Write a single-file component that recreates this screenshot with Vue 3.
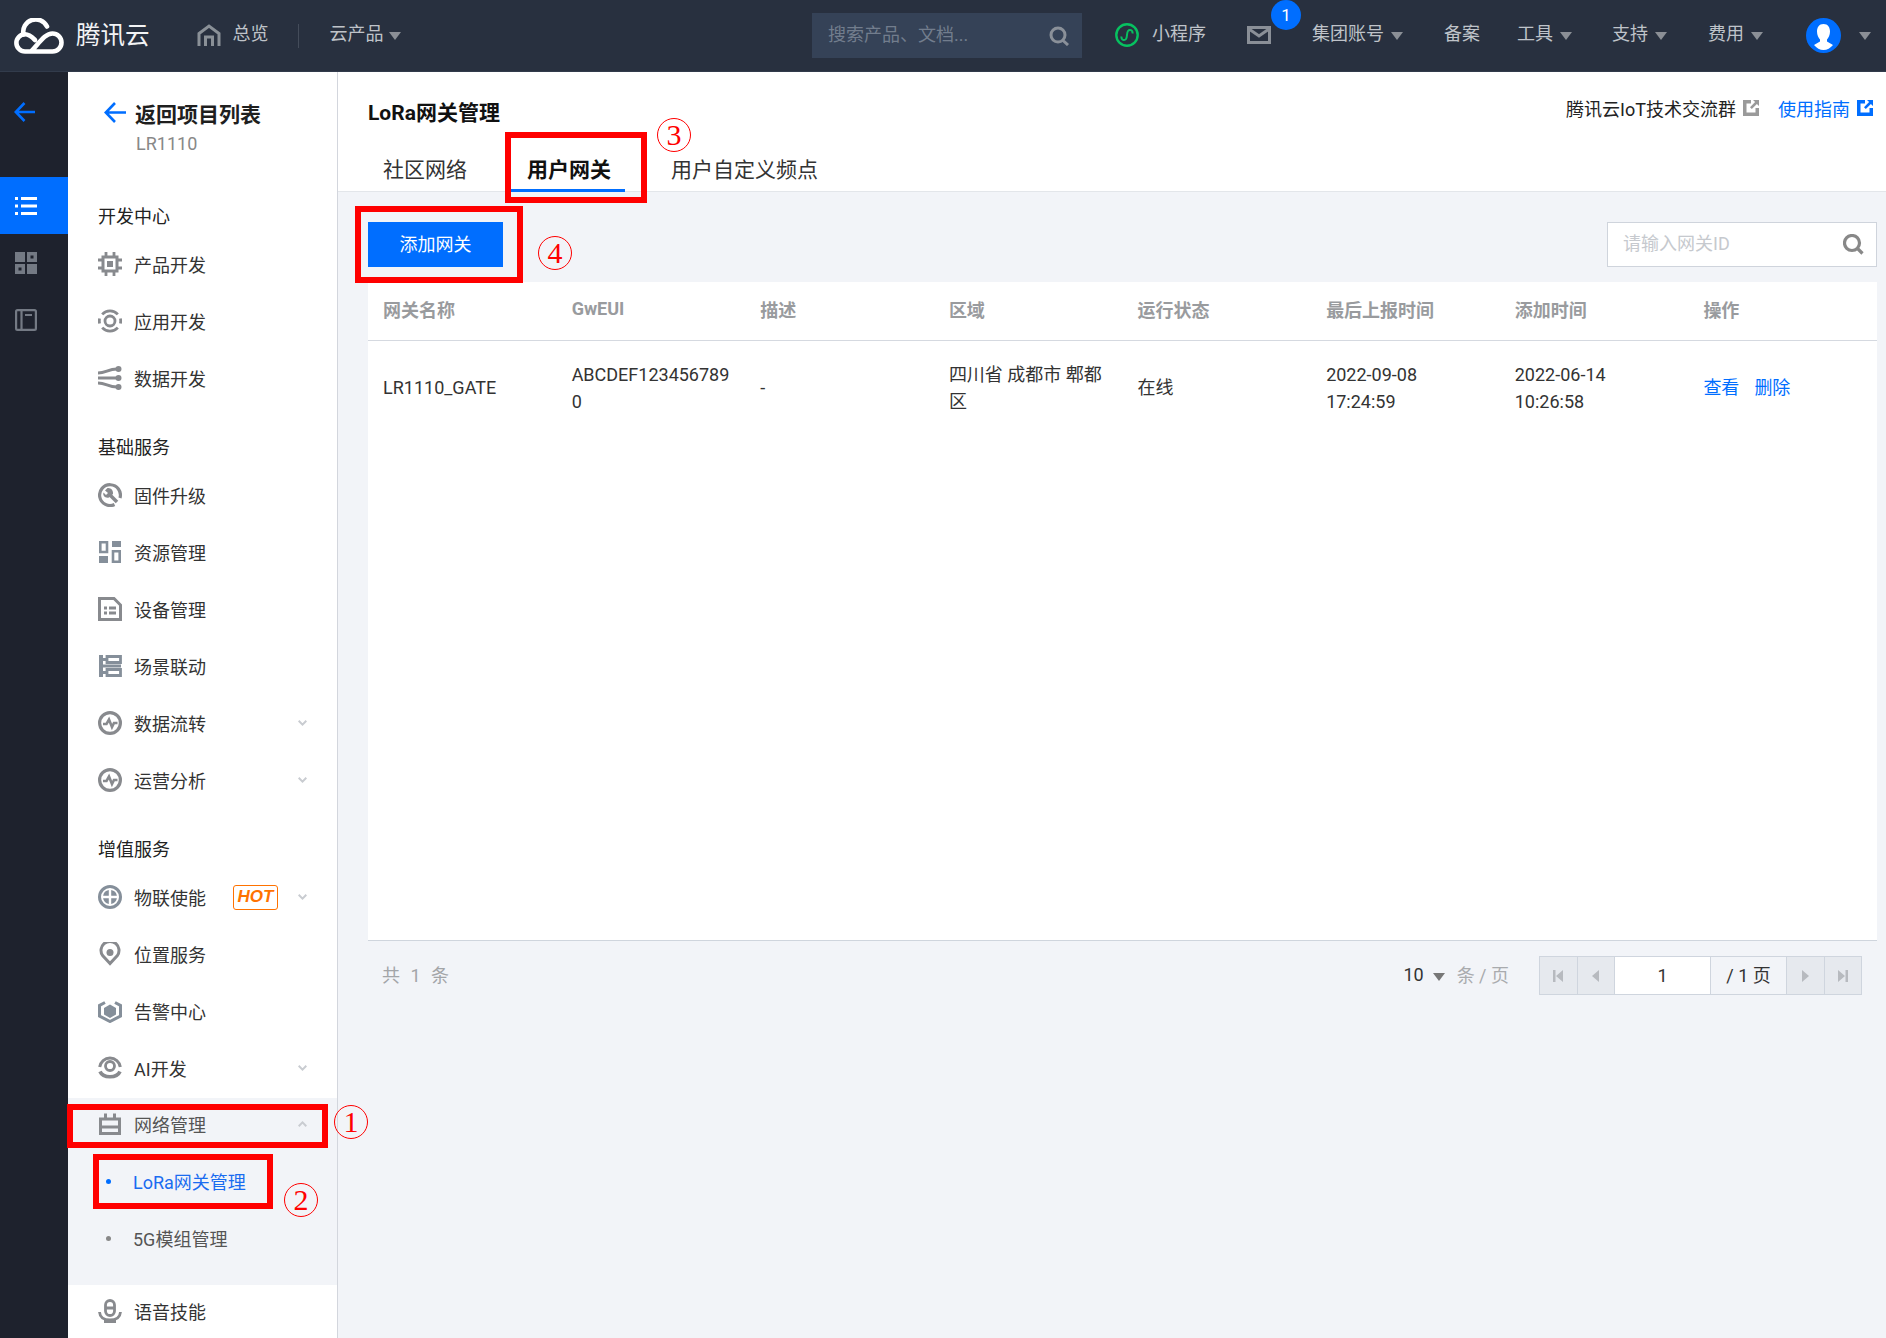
<script setup>
const icons = {
  chip: [
    { s: 3, d: 'M5 5H19V19H5Z' },
    { f: 1, d: 'M9 9H15V15H9Z' },
    { s: 2.8, d: 'M8 0V5M16 0V5M8 19V24M16 19V24M0 8H5M0 16H5M19 8H24M19 16H24' }
  ],
  ring: [
    { s: 2.8, d: 'M4.2 5.4A10.5 10.5 0 0 1 19.8 5.4M22.4 9.5A10.5 10.5 0 0 1 22.4 14.5M19.8 18.6A10.5 10.5 0 0 1 4.2 18.6M1.6 14.5A10.5 10.5 0 0 1 1.6 9.5' },
    { s: 2.8, d: 'M12 7A5 5 0 1 1 12 17A5 5 0 1 1 12 7Z' }
  ],
  flow: [
    { s: 2.8, d: 'M0 7C8 7 10 3 19 3M0 12H19M0 17C8 17 10 21 19 21' },
    { f: 1, d: 'M20.5 0a3 3 0 1 1 0 6a3 3 0 1 1 0-6ZM20.5 9a3 3 0 1 1 0 6a3 3 0 1 1 0-6ZM20.5 18a3 3 0 1 1 0 6a3 3 0 1 1 0-6Z' }
  ],
  firmware: [
    { s: 3.2, d: 'M16.500 21.500A10.400 10.400 0 1 1 22 15' },
    { s: 3.6, d: 'M10.500 10.500L19 19' },
    { f: 1, d: 'M9.500 5L7 7.500L10 10L8 12L5.500 9.500C4.500 12.500 7 15.500 11 14.500L15 11C15.500 7.500 13 4.500 9.500 5Z' }
  ],
  res: [
    { s: 2.6, d: 'M2.300 2.300H9V12H2.300ZM15 11.300H21.700V21.700H15Z' },
    { f: 1, d: 'M14 1H23V7H14ZM1 16H10V23H1Z' }
  ],
  device: [
    { s: 3, d: 'M1.5 1.5H16L22.5 8V22.5H1.5Z' },
    { f: 1, d: 'M6 9.5H9V12.5H6ZM11 9.5H18V12.5H11ZM6 14.5H9V17.5H6ZM11 14.5H18V17.5H11Z' }
  ],
  scene: [
    { s: 2.8, d: 'M9 2.5H22.5V8.5H9ZM9 15.5H22.5V21.5H9Z' },
    { f: 1, d: 'M1 1H5V23H1ZM5 4H9V7H5ZM5 10.5H23V13.5H5ZM5 17H9V20H5Z' }
  ],
  pulse: [
    { s: 3.200, d: 'M12 1.600A10.400 10.400 0 1 1 12 22.400A10.400 10.400 0 1 1 12 1.600Z' },
    { s: 2.6, d: 'M5 13H8.5L11 8.5L14 16L16 12H19.5' }
  ],
  hub: [
    { s: 3, d: 'M12 1.500A10.500 10.500 0 1 1 12 22.500A10.500 10.500 0 1 1 12 1.500Z' },
    { f: 1, d: 'M10.800 5.100V10.800H5.100A7 7 0 0 1 10.800 5.100ZM13.200 5.100A7 7 0 0 1 18.900 10.800H13.200ZM5.100 13.200H10.800V18.900A7 7 0 0 1 5.100 13.200ZM13.200 13.200H18.900A7 7 0 0 1 13.200 18.900Z' }
  ],
  pin: [
    { s: 3, d: 'M12 21.5L4.6 13.5A9 9 0 1 1 19.4 13.5Z' },
    { f: 1, d: 'M12 7a3.500 3.500 0 1 1 0 7a3.500 3.500 0 1 1 0-7Z' }
  ],
  alert: [
    { s: 3, d: 'M7 3.5L1.5 6.5V17L12 22.5L22.5 17V6.5L17 3.5' },
    { f: 1, d: 'M12 5.5L18 9V15.5L12 19L6 15.5V9Z' }
  ],
  ai: [
    { s: 3, d: 'M1.700 11A10.400 10.400 0 0 1 22.300 11' },
    { s: 3.600, d: 'M2 15.500C5 22.500 19 22.500 22 15.500' },
    { s: 2.800, d: 'M12 5.500A4.500 4.500 0 1 1 12 14.500A4.500 4.500 0 1 1 12 5.500Z' }
  ],
  network: [
    { s: 3, d: 'M2.500 7H21.500V21.500H2.500ZM7.500 1.500V7M16.500 1.500V7M2.500 15H21.500' }
  ],
  voice: [
    { s: 2.8, d: 'M12 1.5A4.5 4.5 0 0 1 16.5 6V12A4.5 4.5 0 0 1 7.5 12V6A4.5 4.5 0 0 1 12 1.5ZM7.5 9H16.5' },
    { s: 2.8, d: 'M1.5 13C2 19 6 21 12 21C18 21 22 19 22.5 13M12 21V24M6 22.5H18' }
  ]
}

const groups = [
  {
    title: '开发中心',
    items: [
      { icon: 'chip', label: '产品开发' },
      { icon: 'ring', label: '应用开发' },
      { icon: 'flow', label: '数据开发' }
    ]
  },
  {
    title: '基础服务',
    items: [
      { icon: 'firmware', label: '固件升级' },
      { icon: 'res', label: '资源管理', blue: true },
      { icon: 'device', label: '设备管理' },
      { icon: 'scene', label: '场景联动', blue: true },
      { icon: 'pulse', label: '数据流转', arrow: 'down' },
      { icon: 'pulse', label: '运营分析', arrow: 'down' }
    ]
  },
  {
    title: '增值服务',
    items: [
      { icon: 'hub', label: '物联使能', hot: true, arrow: 'down', blue: true },
      { icon: 'pin', label: '位置服务' },
      { icon: 'alert', label: '告警中心', blue: true },
      { icon: 'ai', label: 'AI开发', arrow: 'down' }
    ]
  }
]

const columns = ['网关名称', 'GwEUI', '描述', '区域', '运行状态', '最后上报时间', '添加时间', '操作']
const row = ['LR1110_GATE', 'ABCDEF1234567890', '-', '四川省 成都市 郫都区', '在线', '2022-09-08 17:24:59', '2022-06-14 10:26:58']
</script>

<template>
  <div class="page">
    <header class="topbar">
      <svg class="logo" viewBox="0 0 50 36" fill="none" stroke="#fff" stroke-width="4.6" stroke-linecap="round">
        <path d="M9.5 16.5A12.5 12.5 0 0 1 33 8.5" />
        <path d="M17 33.5H38.5A9 9 0 0 0 38.5 15.5C31 15.5 26 24 17 33.5H11A8.6 8.6 0 0 1 11 16.3C15 16.3 18 19 21 22" />
      </svg>
      <span class="brand">腾讯云</span>
      <svg class="home" viewBox="0 0 24 22" fill="none" stroke="#8a9097" stroke-width="3">
        <path d="M2 22V9.500L12 2L22 9.500V22M8.500 22V13H15.500V22" />
      </svg>
      <span class="t-link overview">总览</span>
      <i class="divider"></i>
      <span class="t-link">云产品</span>
      <i class="caret products"></i>

      <div class="search">
        <span>搜索产品、文档...</span>
        <svg viewBox="0 0 22 20" fill="none" stroke="#8a9099" stroke-width="3">
          <path d="M10 2A7 7 0 1 1 10 16A7 7 0 1 1 10 2ZM14.5 14L20 19" />
        </svg>
      </div>

      <div class="t-right">
        <div class="mini">
          <svg viewBox="0 0 24 24" fill="none" stroke="#07c160" stroke-width="2.4">
            <path d="M12 1.3A10.7 10.7 0 1 1 12 22.7A10.7 10.7 0 1 1 12 1.3Z" />
            <path stroke-width="2" d="M6.5 13.5C6 17 9.5 18 11 16C12.5 14 11.5 10 13 8C14.5 6 18 7 17.5 10.5" />
          </svg>
          <span class="t-link">小程序</span>
        </div>
        <div class="mail">
          <svg viewBox="0 0 24 18" fill="none" stroke="#8a8f97" stroke-width="3">
            <path d="M1.5 1.5H22.5V16.5H1.5ZM2 3L12 10L22 3" />
          </svg>
          <b class="badge">1</b>
        </div>
        <div class="t-menu"><span class="t-link">集团账号</span><i class="caret"></i></div>
        <span class="t-link">备案</span>
        <div class="t-menu tools"><span class="t-link">工具</span><i class="caret"></i></div>
        <div class="t-menu support"><span class="t-link">支持</span><i class="caret"></i></div>
        <div class="t-menu"><span class="t-link">费用</span><i class="caret"></i></div>
        <div class="t-menu account">
          <svg class="avatar" viewBox="0 0 35 35">
            <circle cx="17.5" cy="17.5" r="17.5" fill="#006eff" />
            <path fill="#fff" d="M17.5 6C22 6 24 9.500 24 13.500C24 17 22.500 20 21 21.500V23.500L27 27C24.500 30 21 32 17.500 32C14 32 10.500 30 8 27L14 23.500V21.500C12.500 20 11 17 11 13.500C11 9.500 13 6 17.500 6Z" />
          </svg>
          <i class="caret"></i>
        </div>
      </div>
    </header>

    <div class="body">
      <nav class="rail">
        <div class="rail-back">
          <svg viewBox="0 0 22 20" fill="none" stroke="#006eff" stroke-width="2.6">
            <path d="M21 10H2M10.500 1L1.800 10L10.500 19" />
          </svg>
        </div>
        <div class="rail-item active">
          <svg viewBox="0 0 22 18" fill="#fff">
            <path d="M0 0H3V3H0ZM6 0H22V3H6ZM0 7.500H3V10.500H0ZM6 7.500H22V10.500H6ZM0 15H3V18H0ZM6 15H22V18H6Z" />
          </svg>
        </div>
        <div class="rail-item">
          <svg viewBox="0 0 22 22" fill="#747a84">
            <path d="M0 0H10V10H0ZM12 12H22V22H12Z" />
            <path fill-rule="evenodd" d="M12 0H22V10H12ZM15.500 3.500V6.500H18.500V3.500ZM0 12H10V22H0ZM3.500 15.500V18.500H6.500V15.500Z" />
          </svg>
        </div>
        <div class="rail-item">
          <svg viewBox="0 0 22 22" fill="none" stroke="#747a84" stroke-width="2.2">
            <path d="M2.500 1.100H19.500Q20.900 1.100 20.900 2.500V19.500Q20.900 20.900 19.500 20.900H2.500Q1.100 20.900 1.100 19.500V2.500Q1.100 1.100 2.500 1.100ZM6.500 1V21M10 6H17" />
          </svg>
        </div>
      </nav>

      <aside class="side">
        <div class="side-head">
          <div class="back">
            <svg viewBox="0 0 22 21" fill="none" stroke="#006eff" stroke-width="2.6">
              <path d="M22 10.500H2M11 1L1.800 10.500L11 20" />
            </svg>
            <span>返回项目列表</span>
          </div>
          <div class="project">LR1110</div>
        </div>

        <section v-for="g in groups" :key="g.title" class="group">
          <h4>{{ g.title }}</h4>
          <div v-for="it in g.items" :key="it.label" class="item">
            <svg class="ico" :class="{ blue: it.blue }" viewBox="0 0 24 24">
              <path
                v-for="(p, i) in icons[it.icon]"
                :key="i"
                :d="p.d"
                :fill="p.f ? 'currentColor' : 'none'"
                :fill-rule="p.f ? 'evenodd' : null"
                :stroke="p.s ? 'currentColor' : 'none'"
                :stroke-width="p.s || 0"
              />
            </svg>
            <span>{{ it.label }}</span>
            <em v-if="it.hot" class="hot">HOT</em>
            <svg v-if="it.arrow" class="chev" viewBox="0 0 9 6" fill="none" stroke="#c9ccd1" stroke-width="2">
              <path d="M.7 .8L4.500 4.600L8.300 .8" />
            </svg>
          </div>
        </section>

        <div class="open-block">
          <div class="item muted">
            <svg class="ico" viewBox="0 0 24 24" fill="none" stroke="currentColor">
              <path :d="icons.network[0].d" stroke-width="3" />
            </svg>
            <span>网络管理</span>
            <svg class="chev" viewBox="0 0 9 6" fill="none" stroke="#c9ccd1" stroke-width="2">
              <path d="M.7 5.200L4.500 1.400L8.300 5.200" />
            </svg>
          </div>
          <div class="sub on"><i></i>LoRa网关管理</div>
          <div class="sub"><i></i>5G模组管理</div>
        </div>

        <div class="item">
          <svg class="ico" viewBox="0 0 24 24" fill="none" stroke="currentColor" stroke-width="2.8">
            <path :d="icons.voice[0].d" />
            <path :d="icons.voice[1].d" />
          </svg>
          <span>语音技能</span>
        </div>
      </aside>

      <main class="main">
        <div class="head">
          <div class="head-top">
            <h1>LoRa网关管理</h1>
            <div class="links">
              <a>腾讯云IoT技术交流群</a>
              <svg class="ext" viewBox="0 0 16 16" fill="#9a9a9a">
                <path d="M0 0H8V3.500H3.500V12.500H12.500V8H16V16H0ZM10 0H16V6L13.900 3.900L8.800 9L7 7.200L12.100 2.100Z" />
              </svg>
              <a class="blue-link">使用指南</a>
              <svg class="ext" viewBox="0 0 16 16" fill="#006eff">
                <path d="M0 0H8V3.500H3.500V12.500H12.500V8H16V16H0ZM10 0H16V6L13.900 3.900L8.800 9L7 7.200L12.100 2.100Z" />
              </svg>
            </div>
          </div>
          <div class="tabs">
            <span class="tab">社区网络</span>
            <span class="tab current">用户网关</span>
            <span class="tab">用户自定义频点</span>
          </div>
        </div>

        <div class="content">
          <div class="toolbar">
            <button class="add">添加网关</button>
            <div class="filter">
              <span>请输入网关ID</span>
              <svg viewBox="0 0 21 21" fill="none" stroke="#888" stroke-width="3.200">
                <path d="M9 1.500A7.500 7.500 0 1 1 9 16.500A7.500 7.500 0 1 1 9 1.500ZM14 14L19.500 19.500" />
              </svg>
            </div>
          </div>

          <div class="table">
            <div class="thead">
              <div v-for="c in columns" :key="c" class="cell">{{ c }}</div>
            </div>
            <div class="trow">
              <div v-for="(v, i) in row" :key="i" class="cell">{{ v }}</div>
              <div class="cell ops"><a>查看</a><a>删除</a></div>
            </div>
          </div>

          <div class="foot">
            <span class="total">共 1 条</span>
            <div class="size">
              <span class="num">10</span>
              <i class="caret"></i>
              <span class="unit">条 / 页</span>
            </div>
            <div class="pager">
              <span class="pg"><svg viewBox="0 0 10 12"><path d="M0 0H2.500V12H0ZM10 0V12L3 6Z" /></svg></span>
              <span class="pg"><svg viewBox="0 0 10 12"><path d="M8 0V12L1 6Z" /></svg></span>
              <span class="pg-input">1</span>
              <span class="pg-total">/ 1 页</span>
              <span class="pg"><svg viewBox="0 0 10 12"><path d="M2 0V12L9 6Z" /></svg></span>
              <span class="pg"><svg viewBox="0 0 10 12"><path d="M0 0L7 6L0 12ZM7.500 0H10V12H7.500Z" /></svg></span>
            </div>
          </div>
        </div>
      </main>
    </div>

    <i class="mark m1"></i>
    <i class="mark m2"></i>
    <i class="mark m3"></i>
    <i class="mark m4"></i>
    <span class="num-mark n1">1</span>
    <span class="num-mark n2">2</span>
    <span class="num-mark n3">3</span>
    <span class="num-mark n4">4</span>
  </div>
</template>

<style>
html, body { margin: 0; background: #f2f4f8; }
</style>

<style scoped>
* { box-sizing: border-box; }
.page {
  position: relative;
  width: 1886px;
  height: 1338px;
  overflow: hidden;
  font-family: Roboto, "Noto Sans CJK SC", sans-serif;
  font-size: 18px;
  color: #222;
  background: #f2f4f8;
}
h1, h4 { margin: 0; }
i, em { font-style: normal; display: block; }

/* top bar */
.topbar {
  height: 72px;
  display: flex;
  align-items: center;
  padding: 0 15px 0 14px;
  background: #28303f;
  border-bottom: 1px solid #323b4b;
}
.logo { width: 50px; height: 36px; flex: none; }
.brand { margin: 2px 0 0 12px; font-size: 24.500px; color: #f2f3f5; line-height: 1; }
.home { width: 24px; height: 22px; margin: -2px 0 0 47px; flex: none; }
.overview { margin-left: 12px; }
.t-link { display: block; padding-bottom: 3px; color: #bfc3c9; white-space: nowrap; line-height: 24px; }
.divider { width: 1px; height: 24px; margin: 0 31px 0 29px; background: #444c5a; }
.caret {
  width: 0;
  height: 0;
  border-left: 6px solid transparent;
  border-right: 6px solid transparent;
  border-top: 8px solid #8b8f96;
  flex: none;
}
.products { margin-left: 5px; }
.search {
  width: 270px;
  height: 45px;
  margin-left: auto;
  padding: 0 12px 0 16px;
  display: flex;
  align-items: center;
  justify-content: space-between;
  background: #354257;
  color: #727d8d;
}
.search span { padding-bottom: 5px; }
.search svg { width: 22px; height: 20px; }
.t-right { display: flex; align-items: center; gap: 41px; margin-left: 33px; }
.mini { display: flex; align-items: center; gap: 13px; }
.mini svg { width: 24px; height: 24px; margin-bottom: 1px; }
.mail { position: relative; width: 24px; height: 18px; margin-bottom: 2px; }
.mail svg { display: block; width: 24px; height: 18px; }
.badge {
  position: absolute;
  left: 24px;
  top: -26px;
  width: 30px;
  height: 30px;
  border-radius: 50%;
  background: #006eff;
  color: #fff;
  font-weight: 400;
  font-size: 17px;
  line-height: 30px;
  text-align: center;
}
.t-menu { display: flex; align-items: center; gap: 7px; }
.tools { margin-left: -4px; }
.support { margin-left: -1px; }
.account { margin-left: 2px; gap: 18px; }
.avatar { width: 35px; height: 35px; display: block; }

/* body */
.body { display: flex; height: 1266px; }
.rail { width: 68px; flex: none; background: #1e222d; }
.rail-back { height: 105px; padding: 30px 0 0 14px; }
.rail-back svg { width: 22px; height: 20px; display: block; }
.rail-item { height: 57px; padding-left: 15px; display: flex; align-items: center; }
.rail-item svg { width: 22px; height: 22px; }
.rail-item.active { background: #006eff; }
.rail-item.active svg { height: 18px; }

.side { width: 270px; flex: none; background: #fff; border-right: 1px solid #d3d6dd; overflow: hidden; }
.side-head { height: 106px; padding: 30px 0 0 36px; }
.back { display: flex; align-items: center; gap: 9px; height: 21px; font-size: 21px; font-weight: 700; color: #1f1f1f; }
.back svg { width: 22px; height: 21px; flex: none; }
.project { margin: 10px 0 0 32px; line-height: 22px; color: #888; }
.group { margin-top: 18px; }
.group h4 { height: 42px; padding-left: 30px; line-height: 42px; font-size: 18px; font-weight: 400; color: #222; }
.item { position: relative; height: 57px; padding: 0 0 5px 30px; display: flex; align-items: center; color: #333; }
.ico { width: 24px; height: 24px; margin-right: 12px; flex: none; color: #888a8e; }
.ico.blue { color: #858f9a; }
.hot {
  width: 45px;
  height: 25px;
  margin-left: 27px;
  border: 1.500px solid #ff7200;
  border-radius: 3px;
  color: #ff7200;
  font-style: italic;
  font-weight: 700;
  font-family: "Liberation Sans", sans-serif;
  font-size: 17px;
  line-height: 22px;
  text-align: center;
}
.chev { position: absolute; left: 230px; top: 23px; width: 9px; height: 6px; }
.open-block { height: 187px; margin-top: -1px; background: #f2f4f8; }
.muted { color: #555; }
.sub { height: 57px; padding: 0 0 5px 38px; display: flex; align-items: center; font-size: 18px; color: #555; }
.sub i { width: 5px; height: 5px; margin-right: 22px; border-radius: 50%; background: #888; flex: none; }
.sub.on { color: #1a6cf0; }
.sub.on i { background: #006eff; }

/* main */
.main { flex: 1; min-width: 0; display: flex; flex-direction: column; }
.head { height: 120px; padding: 0 0 0 30px; background: #fff; border-bottom: 1px solid #e3e6ea; }
.head-top { height: 76px; display: flex; justify-content: space-between; padding: 23px 13px 0 0; }
h1 { font-size: 21px; font-weight: 700; line-height: 36px; color: #111; }
.links { display: flex; gap: 7px; height: 30px; align-items: center; margin-top: -2px; }
.links a { color: #222; white-space: nowrap; }
.links .blue-link { color: #006eff; margin-left: 12px; }
.ext { width: 16px; height: 16px; flex: none; }
.tabs { display: flex; gap: 30px; height: 44px; }
.tab { padding: 0 15px; font-size: 21px; line-height: 44px; color: #333; white-space: nowrap; }
.tab.current { font-weight: 700; color: #111; border-bottom: 3px solid #006eff; height: 44px; width: 114px; padding: 0 0 0 2px; text-align: center; margin: 0 1px 0 -1px; }

.content { flex: 1; padding: 0 9px 0 30px; }
.toolbar { height: 90px; padding-top: 30px; display: flex; justify-content: space-between; align-items: flex-start; }
.add { width: 135px; height: 45px; border: 0; background: #006eff; color: #fff; font: inherit; padding: 0 0 3px; }
.filter {
  width: 270px;
  height: 45px;
  padding: 0 12px 0 15px;
  display: flex;
  align-items: center;
  justify-content: space-between;
  background: #fff;
  border: 1px solid #cfd4dc;
  color: #c6c9ce;
}
.filter span { padding-bottom: 6px; }
.filter svg { width: 21px; height: 21px; }
.table { height: 659px; background: #fff; border-bottom: 1px solid #cfd5dd; }
.thead, .trow { display: grid; grid-template-columns: repeat(8, 1fr); align-items: center; }
.thead { height: 59px; border-bottom: 1px solid #d5d9e0; color: #999b9e; font-weight: 700; padding-bottom: 5px; }
.trow { height: 92px; padding-top: 1px; color: #333; line-height: 27px; }
.cell { padding: 0 14px 0 15px; overflow-wrap: anywhere; }
.ops { display: flex; gap: 15px; }
.ops a { color: #006eff; }

.foot { display: flex; align-items: center; height: 39px; margin-top: 15px; padding: 0 15px 0 14px; }
.total { padding-bottom: 3px; color: #a3a5a8; word-spacing: 6px; margin-right: auto; }
.size { display: flex; align-items: center; margin-right: 30px; margin-left: -2px; }
.num { color: #333; padding-bottom: 2px; }
.size .caret { margin: 3px 0 0 9px; border-top-color: #777; }
.unit { margin-left: 12px; padding-bottom: 4px; color: #a9abae; }
.pager { display: flex; height: 39px; border: 1px solid #cfd5de; width: 323px; }
.pg {
  flex: 1;
  display: flex;
  align-items: center;
  justify-content: center;
  background: #e6e9ee;
  border-right: 1px solid #cfd5de;
}
.pg:last-child { border-right: 0; }
.pg svg { width: 10px; height: 12px; fill: #b7babf; }
.pg-input { width: 96px; flex: none; background: #fff; text-align: center; line-height: 37px; border-right: 1px solid #cfd5de; color: #333; }
.pg-total { width: 76px; flex: none; text-align: center; line-height: 37px; border-right: 1px solid #cfd5de; color: #333; }

/* annotations painted over the screenshot */
.mark { position: absolute; border: 6px solid #f00; }
.m1 { left: 67px; top: 1104px; width: 261px; height: 44px; }
.m2 { left: 93px; top: 1154px; width: 180px; height: 55px; }
.m3 { left: 505px; top: 132px; width: 142px; height: 71px; }
.m4 { left: 355px; top: 206px; width: 168px; height: 77px; }
.num-mark {
  position: absolute;
  width: 34px;
  height: 34px;
  border: 1.500px solid #f00;
  border-radius: 50%;
  color: #f00;
  font-family: "Liberation Serif", serif;
  font-size: 30px;
  line-height: 31px;
  text-align: center;
}
.n1 { left: 334px; top: 1105px; }
.n2 { left: 284px; top: 1183px; }
.n3 { left: 657px; top: 118px; }
.n4 { left: 538px; top: 236px; }
</style>
